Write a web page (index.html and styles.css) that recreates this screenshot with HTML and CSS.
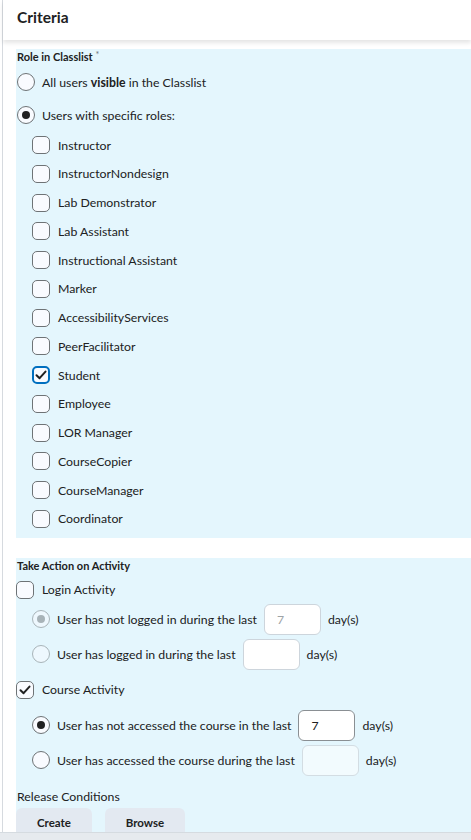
FILE: index.html
```html
<!DOCTYPE html>
<html>
<head>
<meta charset="utf-8">
<link rel="stylesheet" href="styles.css">
</head>
<body>
<div class="page">
  <header class="head">Criteria</header>
  <div class="content">
    <section class="panel panel-roles">
      <div class="legend">Role in Classlist <span class="req">*</span></div>
      <label class="radio-row first"><span class="radio"></span><span>All users <b>visible</b> in the Classlist</span></label>
      <label class="radio-row second"><span class="radio on"></span><span>Users with specific roles:</span></label>
      <div class="roles">
        <label class="cb-row"><span class="cb"></span>Instructor</label>
        <label class="cb-row"><span class="cb"></span>InstructorNondesign</label>
        <label class="cb-row"><span class="cb"></span>Lab Demonstrator</label>
        <label class="cb-row"><span class="cb"></span>Lab Assistant</label>
        <label class="cb-row"><span class="cb"></span>Instructional Assistant</label>
        <label class="cb-row"><span class="cb"></span>Marker</label>
        <label class="cb-row"><span class="cb"></span>AccessibilityServices</label>
        <label class="cb-row"><span class="cb"></span>PeerFacilitator</label>
        <label class="cb-row"><span class="cb focus"><svg viewBox="0 0 18 18" width="18" height="18"><path d="M4.5 9.2 L7.6 12.2 L13.5 5.6" fill="none" stroke="#202122" stroke-width="2" stroke-linecap="round" stroke-linejoin="round"/></svg></span>Student</label>
        <label class="cb-row"><span class="cb"></span>Employee</label>
        <label class="cb-row"><span class="cb"></span>LOR Manager</label>
        <label class="cb-row"><span class="cb"></span>CourseCopier</label>
        <label class="cb-row"><span class="cb"></span>CourseManager</label>
        <label class="cb-row"><span class="cb"></span>Coordinator</label>
      </div>
    </section>

    <section class="panel panel-activity">
      <div class="legend">Take Action on Activity</div>
      <label class="cb-row top login"><span class="cb"></span>Login Activity</label>
      <div class="sub disabled">
        <div class="input-row"><span class="radio on"></span><span class="lbl">User has not logged in during the last</span><span class="field">7</span><span class="unit">day(s)</span></div>
        <div class="input-row r2"><span class="radio"></span><span class="lbl">User has logged in during the last</span><span class="field"></span><span class="unit">day(s)</span></div>
      </div>
      <label class="cb-row top course"><span class="cb"><svg viewBox="0 0 18 18" width="18" height="18"><path d="M4.5 9.2 L7.6 12.2 L13.5 5.6" fill="none" stroke="#202122" stroke-width="2" stroke-linecap="round" stroke-linejoin="round"/></svg></span>Course Activity</label>
      <div class="sub">
        <div class="input-row first"><span class="radio on"></span><span class="lbl">User has not accessed the course in the last</span><span class="field active">7</span><span class="unit">day(s)</span></div>
        <div class="input-row r2"><span class="radio"></span><span class="lbl">User has accessed the course during the last</span><span class="field off"></span><span class="unit">day(s)</span></div>
      </div>
      <div class="release">Release Conditions</div>
      <div class="buttons">
        <button class="btn btn-create">Create</button>
        <button class="btn btn-browse">Browse</button>
      </div>
    </section>
  </div>
</div>
<div class="footer-edge"></div>
</body>
</html>
```

FILE: styles.css
```css
html, body {
  margin: 0;
  padding: 0;
  background: #ffffff;
}
body {
  font-family: Lato, "Noto Sans", sans-serif;
  color: #202122;
  font-size: 12.3px;
  overflow: hidden;
  height: 840px;
}
.page {
  margin-left: 2px;
  border-left: 1px solid #d6dadf;
  min-height: 840px;
}
.head {
  height: 35px;
  padding: 5px 0 0 14px;
  font-size: 15.5px;
  font-weight: 700;
  line-height: 24px;
  color: #202122;
  background: #fff;
  box-shadow: 0 3px 4px rgba(0,0,0,0.10);
  position: relative;
  z-index: 1;
}
.content {
  padding: 9px 0 0 13px;
}
.panel {
  background: #e4f6fd;
}
.panel-roles {
  padding: 0 0 10px 0;
}
.legend {
  font-size: 11px;
  font-weight: 700;
  line-height: 16px;
  padding-left: 1px;
}
.req {
  font-size: 9px;
  vertical-align: top;
  line-height: 12px;
  font-weight: 400;
  color: #6e7376;
}
.radio-row {
  display: flex;
  align-items: center;
  gap: 7px;
  height: 18px;
  padding-left: 1px;
}
.radio-row.first { margin-top: 8px; }
.radio-row.second { margin-top: 15px; }
.radio-row b { font-weight: 700; }
.radio {
  box-sizing: border-box;
  width: 18px;
  height: 18px;
  flex: none;
  border-radius: 50%;
  border: 1px solid #6e7376;
  background: #f9fbff;
  position: relative;
}
.radio.on::after {
  content: "";
  position: absolute;
  left: 4px;
  top: 4px;
  width: 8px;
  height: 8px;
  border-radius: 50%;
  background: #202122;
}
.roles {
  margin-top: 12px;
  padding-left: 16px;
  display: flex;
  flex-direction: column;
  gap: 10.77px;
}
.cb-row {
  display: flex;
  align-items: center;
  gap: 8px;
  height: 18px;
}
.cb {
  box-sizing: border-box;
  width: 18px;
  height: 18px;
  flex: none;
  border-radius: 5px;
  border: 1px solid #6e7376;
  background: #f9fbff;
  display: flex;
  align-items: center;
  justify-content: center;
}
.cb svg { display: block; flex: none; }
.cb.focus {
  border: 2px solid #006fbf;
}
.panel-activity {
  margin-top: 20px;
  height: 275px;
}
.cb-row.login { margin-top: 7px; }
.cb-row.course { margin-top: 11px; }
.sub {
  padding-left: 16px;
  margin-top: 5px;
}
.sub.disabled .radio { opacity: 0.5; }
.sub.disabled .radio.on::after { background: #6e7376; }
.cb-row.course + .sub { margin-top: 11px; }
.input-row {
  display: flex;
  align-items: center;
  height: 31px;
}
.input-row.r2 { margin-top: 4px; }
.input-row .lbl { margin-left: 7px; }
.field {
  box-sizing: border-box;
  width: 57px;
  height: 31px;
  margin-left: 7px;
  border: 1px solid #cdd5dc;
  border-radius: 6px;
  background: #ffffff;
  padding-left: 12px;
  line-height: 29px;
  color: #9ea3a6;
}
.field.active {
  border-color: #8a8f93;
  color: #202122;
}
.field.off {
  background: #f2fbfe;
  border-color: #d3dde3;
}
.unit { margin-left: 7px; }
.release {
  margin-top: 13px;
  line-height: 16px;
  padding-left: 1px;
}
.buttons {
  margin-top: 3px;
  display: flex;
  gap: 13px;
}
.btn {
  font-family: Lato, "Noto Sans", sans-serif;
  font-size: 11.5px;
  font-weight: 700;
  color: #202122;
  background: #e3e9f1;
  border: none;
  border-radius: 6px;
  height: 30px;
  padding: 0;
}
.btn-create { width: 76px; }
.btn-browse { width: 80px; }
.footer-edge {
  position: fixed;
  left: 0;
  right: 0;
  bottom: 0;
  height: 7px;
  background: #e6eaee;
  border-top: 1px solid #d5dbe0;
}
```
